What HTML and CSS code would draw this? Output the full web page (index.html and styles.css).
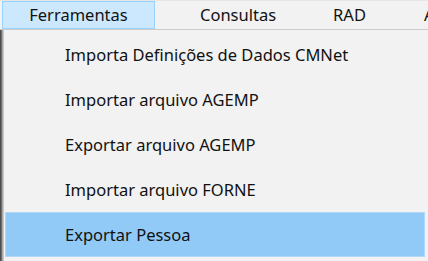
FILE: index.html
```html
<!DOCTYPE html>
<html lang="pt">
<head>
<meta charset="utf-8">
<title>Menu Ferramentas</title>
<link rel="stylesheet" href="styles.css">
</head>
<body>
<div class="menubar">
  <div class="top-item active">Ferramentas</div>
  <div class="top-item consultas">Consultas</div>
  <div class="top-item rad">RAD</div>
  <div class="top-item more">A</div>
</div>
<div class="lower">
  <div class="behind"></div>
  <div class="dropdown">
    <div class="item">Importa Definições de Dados CMNet</div>
    <div class="item">Importar arquivo AGEMP</div>
    <div class="item">Exportar arquivo AGEMP</div>
    <div class="item">Importar arquivo FORNE</div>
    <div class="item selected">Exportar Pessoa</div>
  </div>
</div>
</body>
</html>
```
FILE: styles.css
```css
html, body {
  margin: 0;
  padding: 0;
  width: 428px;
  height: 261px;
  overflow: hidden;
  background: #f0f0f0;
  font-family: "Noto Sans", "Open Sans", sans-serif;
  font-size: 16.5px;
  color: #111;
}

.menubar {
  display: flex;
  align-items: stretch;
  height: 28px;
  border-top: 1px solid #e6e6e6;
  border-bottom: 1px solid #cccccc;
  background: #f2f2f2;
  padding-left: 2px;
  white-space: nowrap;
  overflow: hidden;
}

.top-item {
  flex: none;
  display: flex;
  align-items: center;
  line-height: 1;
}

.top-item.active {
  box-sizing: border-box;
  width: 153px;
  justify-content: center;
  background: #cce8ff;
  border: 1px solid #99d1ff;
}

.top-item.consultas {
  margin-left: 45px;
}

.top-item.rad {
  margin-left: 57px;
}

.top-item.more {
  margin-left: 58px;
}

.lower {
  display: flex;
  height: 232px;
}

.behind {
  width: 3px;
  flex: none;
  background: linear-gradient(to right, #4d4d4d 0, #4d4d4d 1px, #6e6e6e 1px, #6e6e6e 2px, #a8a8a8 2px);
}

.dropdown {
  flex: none;
  width: 430px;
  border-left: 1px solid #c8c8c8;
  background: #f2f2f2;
  padding: 2px 0 0 1px;
}

.item {
  box-sizing: border-box;
  width: 420px;
  height: 45px;
  display: flex;
  align-items: center;
  padding-left: 59px;
  border: 1px solid transparent;
}

.item.selected {
  background: #91c9f7;
  border-color: #b0d8f8;
}
```
